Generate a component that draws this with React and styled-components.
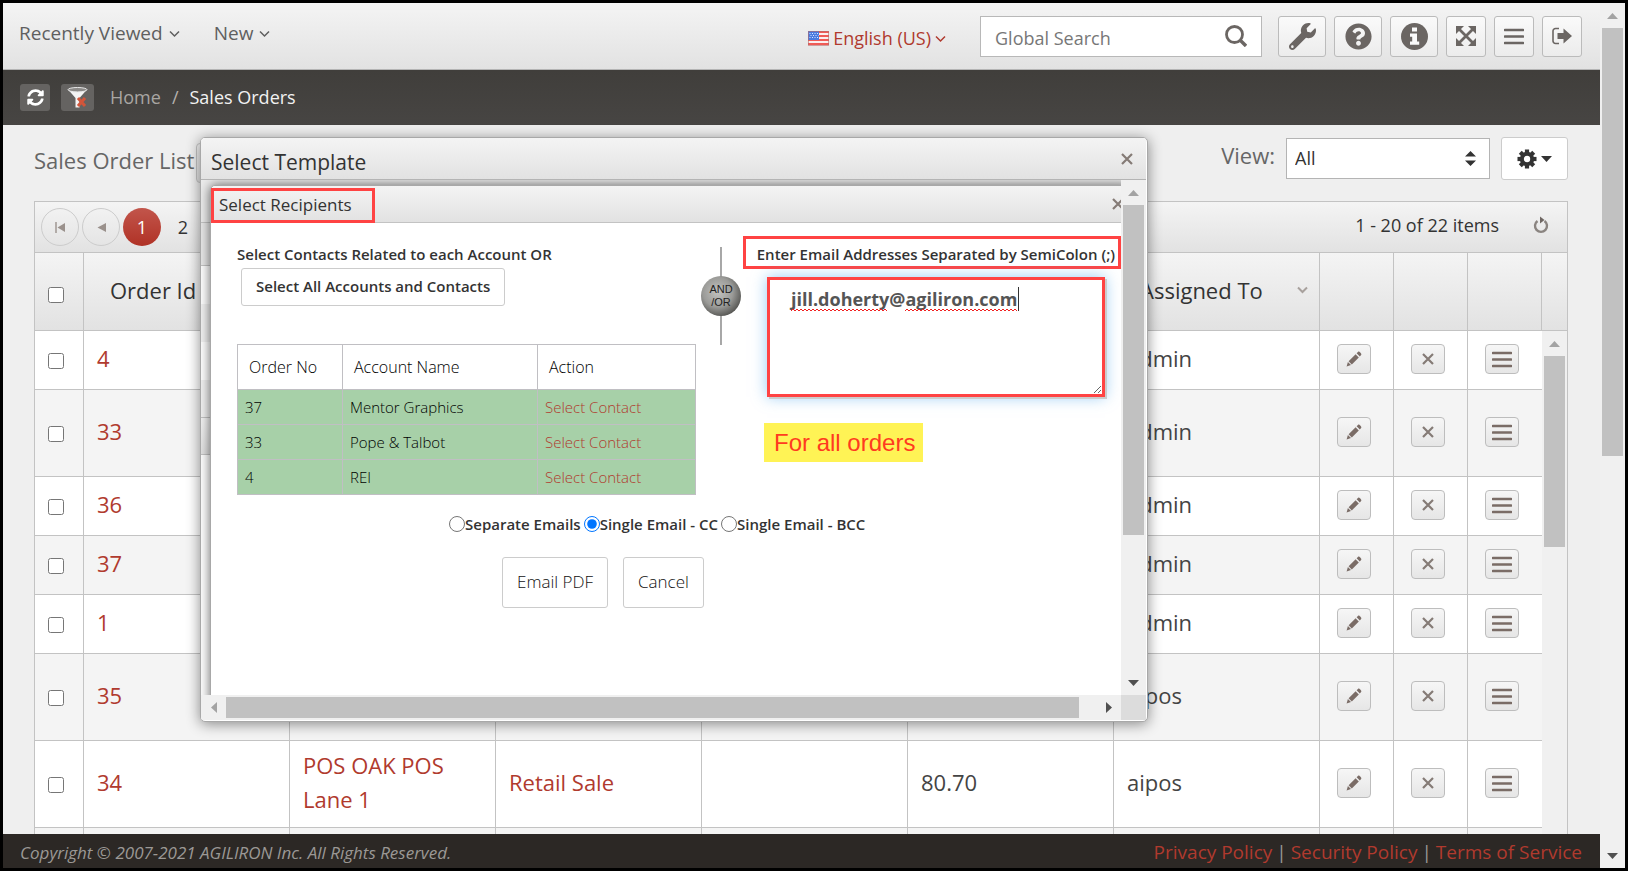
import React from 'react';
import styled, { createGlobalStyle, css } from 'styled-components';
import { FaWrench, FaQuestionCircle, FaSyncAlt, FaPlus } from 'react-icons/fa';

const GlobalStyle = createGlobalStyle`
  *, *::before, *::after {
    box-sizing: border-box;
  }

  body {
    margin: 0;
    font-family: 'Open Sans', 'Noto Sans', sans-serif;
    font-size: 18px;
    color: #333;
    background: #000;
  }

  button, input, select, textarea {
    font: inherit;
    color: inherit;
    margin: 0;
  }

  a {
    color: #b03a2e;
    text-decoration: none;
  }
`;

const barGradient = 'linear-gradient(#f4f4f4, #e2e2e2)';
const line = '#c3c3c3';

const Frame = styled.div`
  position: relative;
  display: flex;
  height: 100vh;
  border: 3px solid #000;
  background: #efefef;
  overflow: hidden;
`;

const Page = styled.div`
  flex: 1;
  min-width: 0;
  display: flex;
  flex-direction: column;
`;

/* scrollbars */

const Track = styled.div`
  flex: none;
  display: flex;
  flex-direction: ${props => (props.$horizontal ? 'row' : 'column')};
  background: #f0f0f0;
  ${props => (props.$horizontal ? 'height: 25px;' : 'width: 25px;')}
`;

const ArrowBox = styled.div`
  flex: none;
  width: 25px;
  height: 25px;
  display: flex;
  align-items: center;
  justify-content: center;
`;

const ThumbArea = styled.div`
  flex: 1;
  min-width: 0;
  min-height: 0;
`;

const Thumb = styled.div`
  background: #c1c1c1;
  ${props => (props.$horizontal ? 'height: 21px; margin: 2px 0;' : 'width: 21px; margin: 0 2px;')}
`;

const arrowShapes = {
  up: '0,6 11,6 5.5,0',
  down: '0,0 11,0 5.5,6',
  left: '6,0 6,11 0,5.5',
  right: '0,0 0,11 6,5.5',
};

const Arrow = ({ dir, color }) => {
  const vertical = dir === 'up' || dir === 'down';
  return (
    <svg width={vertical ? 11 : 6} height={vertical ? 6 : 11} aria-hidden="true">
      <polygon points={arrowShapes[dir]} fill={color} />
    </svg>
  );
};

const Scrollbar = ({ horizontal, size, openEnded }) => (
  <Track $horizontal={horizontal}>
    <ArrowBox>
      <Arrow dir={horizontal ? 'left' : 'up'} color="#a3a3a3" />
    </ArrowBox>
    <ThumbArea>
      <Thumb $horizontal={horizontal} style={horizontal ? { width: size } : { height: size }} />
    </ThumbArea>
    {!openEnded && (
      <ArrowBox>
        <Arrow dir={horizontal ? 'right' : 'down'} color="#505050" />
      </ArrowBox>
    )}
  </Track>
);

/* top bar */

const TopBar = styled.header`
  flex: none;
  height: 67px;
  display: flex;
  align-items: center;
  padding: 0 18px 0 16px;
  background: ${barGradient};
  border-bottom: 1px solid #b4b4b4;
`;

const MenuButton = styled.button`
  display: flex;
  align-items: center;
  gap: 6px;
  padding: 0;
  margin-right: 34px;
  margin-bottom: 6px;
  border: none;
  background: none;
  font-size: ${props => (props.$language ? 18 : 19)}px;
  color: ${props => (props.$language ? '#b03a2e' : '#5f5f5f')};
  ${props => props.$language && css`
    margin: 4px 34px 0 auto;
    gap: 4px;
  `}
`;

const SearchBox = styled.label`
  display: flex;
  align-items: center;
  width: 282px;
  height: 41px;
  margin-right: 16px;
  padding: 0 14px;
  background: #fff;
  border: 1px solid #b8b8b8;
`;

const SearchInput = styled.input`
  flex: 1;
  min-width: 0;
  padding: 3px 0 0;
  border: none;
  outline: none;
  background: none;

  &::placeholder {
    color: #777;
    opacity: 1;
  }
`;

const Tools = styled.div`
  display: flex;
  gap: 8px;
`;

const ToolButton = styled.button`
  width: ${props => (props.$wide ? 48 : 40)}px;
  height: 41px;
  display: flex;
  align-items: center;
  justify-content: center;
  padding: 0;
  color: #6b6663;
  background: linear-gradient(#fafafa, #ececec);
  border: 1px solid #bbb;
  border-radius: 3px;
`;

const Crumbs = styled.nav`
  flex: none;
  height: 55px;
  display: flex;
  align-items: center;
  gap: 11px;
  padding: 0 17px 2px;
  color: #b5b1ae;
  background: linear-gradient(#403e3b, #474543);
`;

const CrumbButton = styled.button`
  width: ${props => (props.$wide ? 33 : 30)}px;
  height: 27px;
  display: flex;
  align-items: center;
  justify-content: center;
  margin-top: 2px;
  padding: 0;
  color: #fff;
  background: #656361;
  border: none;
  border-radius: 3px;
`;

const CrumbLink = styled.a`
  margin-left: 5px;
  color: #a9a6a3;
`;

const CrumbCurrent = styled.span`
  color: #f2f2f2;
`;

/* order list */

const Main = styled.main`
  flex: 1;
  min-height: 0;
  display: flex;
  flex-direction: column;
  padding: 0 32px 0 31px;
`;

const ListHead = styled.div`
  flex: none;
  height: 76px;
  display: flex;
  align-items: flex-start;
  padding-top: 12px;
`;

const ListTitle = styled.h1`
  margin: 3px 2px 0 0;
  font-size: 22px;
  line-height: 40px;
  font-weight: 400;
  color: #666;
`;

const AddButton = styled.button`
  width: 48px;
  height: 40px;
  margin-top: 6px;
  padding: 0;
  background: ${barGradient};
  border: 1px solid ${line};
  border-radius: 4px;
`;

const ViewLabel = styled.label`
  margin: 0 11px 0 auto;
  font-size: 22px;
  line-height: 36px;
  color: #666;
`;

const SelectWrap = styled.div`
  position: relative;
  width: 204px;
  margin: 1px 11px 0 0;

  svg {
    position: absolute;
    right: 14px;
    top: 13px;
    pointer-events: none;
  }
`;

const ViewSelect = styled.select`
  width: 100%;
  height: 41px;
  padding: 0 8px 2px;
  appearance: none;
  background: #fff;
  border: 1px solid #b4b4b4;
  border-radius: 0;
`;

const GearButton = styled.button`
  width: 67px;
  height: 43px;
  display: flex;
  align-items: center;
  justify-content: center;
  gap: 4px;
  padding: 0;
  background: #fff;
  border: 1px solid #ccc;
  border-radius: 3px;
`;

const Grid = styled.section`
  flex: 1;
  min-height: 0;
  display: flex;
  flex-direction: column;
  border: 1px solid ${line};
  border-bottom: none;
  background: #f0f0f0;
`;

const Pager = styled.div`
  flex: none;
  height: 51px;
  display: flex;
  align-items: center;
  gap: 3px;
  padding: 0 18px 0 6px;
  background: ${barGradient};
  border-bottom: 1px solid ${line};
`;

const PagerButton = styled.button`
  width: 38px;
  height: 38px;
  display: flex;
  align-items: center;
  justify-content: center;
  padding: 0;
  color: ${props => (props.$active ? '#fff' : '#333')};
  background: ${props => (props.$active ? 'linear-gradient(#c2554b, #b03226)' : 'none')};
  border: ${props => (props.$round ? '1px solid #ccc' : 'none')};
  border-radius: 50%;
`;

const PagerInfo = styled.span`
  margin-left: auto;
  padding-bottom: 4px;
`;

const RefreshButton = styled.button`
  display: flex;
  margin-left: 31px;
  padding: 0 0 4px;
  background: none;
  border: none;
`;

const HeadRow = styled.div`
  flex: none;
  display: flex;
  padding-right: 25px;
  background: ${barGradient};
  border-bottom: 1px solid ${line};
`;

const BodyRow = styled.div`
  flex: 1;
  min-height: 0;
  display: flex;
  overflow: hidden;
`;

const BodyScroll = styled.div`
  flex: 1;
  min-width: 0;
  overflow: hidden;
`;

const OrderTable = styled.table`
  width: 100%;
  table-layout: fixed;
  border-collapse: separate;
  border-spacing: 0;
  font-size: 22px;
  line-height: 34px;
`;

const HeadCell = styled.th`
  height: 77px;
  padding: ${props => (props.$check ? '0 0 0 13px' : '0 11px 4px 26px')};
  font-weight: 400;
  text-align: left;
  border-right: 1px solid ${line};
`;

const HeadLabel = styled.span`
  display: flex;
  align-items: center;
  justify-content: space-between;
  white-space: nowrap;
`;

const Row = styled.tr`
  height: ${props => (props.$tall ? 87 : 59)}px;
  color: #444;
  background: ${props => (props.$alt ? '#f4f4f4' : '#fff')};
`;

const Cell = styled.td`
  padding: 0 13px 4px;
  border-right: 1px solid ${line};
  border-bottom: 1px solid ${line};

  &:last-child {
    border-right: none;
  }
`;

const ActionCell = styled(Cell)`
  padding: 0 17px 2px;
`;

const Check = styled.input`
  display: block;
  width: 16px;
  height: 16px;
  margin-top: 6px;
`;

const RowButton = styled.button`
  width: 34px;
  height: 30px;
  display: flex;
  align-items: center;
  justify-content: center;
  padding: 0;
  background: linear-gradient(#f6f6f6, #e6e6e6);
  border: 1px solid #bdbdbd;
  border-radius: 4px;
`;

const Footer = styled.footer`
  flex: none;
  height: 34px;
  display: flex;
  align-items: center;
  justify-content: space-between;
  padding: 2px 18px 0 17px;
  color: #9b9895;
  background: #2c2825;
`;

const Copyright = styled.em`
  font-size: 17px;
`;

const FooterLinks = styled.div`
  display: flex;
  gap: 4px;
  font-size: 19px;
`;

/* template window, with the recipients window inside it */

const TemplateWindow = styled.section`
  position: absolute;
  left: 197px;
  top: 134px;
  width: calc(100% - 674px);
  height: 585px;
  display: flex;
  flex-direction: column;
  padding: 0 1px 1px 0;
  border: 1px solid #a8a8a8;
  border-radius: 5px;
  background: #fff;
  box-shadow: 0 2px 14px rgba(0, 0, 0, 0.45);
  overflow: hidden;
`;

const TemplateHead = styled.div`
  flex: none;
  height: 42px;
  display: flex;
  align-items: center;
  justify-content: space-between;
  padding: 6px 13px 0 10px;
  background: ${barGradient};
  border-bottom: 1px solid #b4b4b4;
`;

const WindowTitle = styled.h2`
  margin: 0;
  font-size: ${props => (props.$small ? 17 : 21)}px;
  font-weight: 400;
`;

const CloseButton = styled.button`
  display: flex;
  flex: none;
  padding: 0;
  margin-bottom: ${props => (props.$raised ? 6 : 0)}px;
  background: none;
  border: none;
`;

const TemplateMain = styled.div`
  flex: 1;
  min-height: 0;
  display: flex;
`;

const TemplateBody = styled.div`
  position: relative;
  flex: 1;
  min-width: 0;
  overflow: hidden;
`;

const TemplateStripe = styled.div`
  height: ${props => props.$height}px;
  background: ${props => props.$fill};
  ${props => props.$lined && css`
    border-bottom: 1px solid ${line};
  `}
`;

const TemplateFoot = styled.div`
  flex: none;
  display: flex;
`;

const Corner = styled.div`
  width: 25px;
  height: 25px;
  background: #dcdcdc;
`;

const HorizontalBar = styled.div`
  flex: 1;
  min-width: 0;
`;

const RecipientsWindow = styled.section`
  position: absolute;
  left: 9px;
  top: 5px;
  right: -10px;
  bottom: -20px;
  border: 1px solid #a8a8a8;
  border-radius: 5px;
  background: #fff;
  box-shadow: 0 0 12px rgba(0, 0, 0, 0.6);
`;

const RecipientsHead = styled.div`
  height: 37px;
  display: flex;
  align-items: center;
  justify-content: space-between;
  padding-right: 6px;
  background: ${barGradient};
  border-bottom: 1px solid ${line};
  border-radius: 5px 5px 0 0;
`;

const redBox = css`
  border: 3px solid #ff4343;
`;

const TitleMark = styled.div`
  ${redBox}
  width: 164px;
  height: 35px;
  margin-top: 3px;
  padding: 0 0 2px 5px;
  display: flex;
  align-items: center;
`;

const RecipientsMain = styled.div`
  display: flex;
  align-items: flex-start;
  padding: 13px 9px 0 26px;
`;

const AccountsColumn = styled.div`
  width: 459px;
  padding-top: 7px;
`;

const FieldTitle = styled.h3`
  margin: 0;
  font-size: 15px;
  line-height: 22px;
  font-weight: 600;
`;

const PlainButton = styled.button`
  height: ${props => (props.$large ? 51 : 38)}px;
  padding: 0 14px 2px;
  font-size: ${props => (props.$large ? 17 : 15)}px;
  font-weight: ${props => (props.$large ? 300 : 600)};
  color: ${props => (props.$large ? '#111' : '#333')};
  background: #fff;
  border: 1px solid #ccc;
  border-radius: 3px;
`;

const SelectAllButton = styled(PlainButton)`
  margin: 3px 0 0 4px;
`;

const AccountTable = styled.table`
  width: 100%;
  margin-top: 38px;
  table-layout: fixed;
  border-collapse: collapse;
  font-size: 15px;
  font-weight: 300;
  color: #000;
  border: 1px solid #c0bfc3;

  th {
    height: 45px;
    padding: 0 11px;
    font-size: 16px;
    font-weight: 300;
    text-align: left;
    border: 1px solid #c0bfc3;
  }

  td {
    height: 35px;
    padding: 0 7px;
    background: #a7d0a8;
    border: 1px solid #c0bfc3;
  }
`;

const Divider = styled.div`
  width: 47px;
  margin-top: 11px;
  padding-left: 3px;
  display: flex;
  justify-content: center;
`;

const EmailColumn = styled.div`
  flex: 1;
  min-width: 0;
`;

const EmailTitle = styled.label`
  ${redBox}
  display: flex;
  align-items: center;
  justify-content: flex-end;
  width: 378px;
  height: 33px;
  padding: 3px 3px 0;
  font-size: 15px;
  font-weight: 600;
  white-space: nowrap;
`;

const EmailMark = styled.div`
  ${redBox}
  position: relative;
  width: 338px;
  height: 120px;
  margin: 8px 0 0 24px;
  box-shadow: 2px 2px 0 #ccc, 0 0 14px rgba(82, 168, 236, 0.6);
`;

const EmailInput = styled.textarea`
  display: block;
  width: 100%;
  height: 100%;
  padding: 5px 21px;
  font-size: 18px;
  line-height: 28px;
  font-weight: 700;
  color: #555;
  background: #fff;
  border: none;
  outline: none;
`;

const Squiggles = styled.svg`
  position: absolute;
  left: 21px;
  top: 7px;
`;

const Note = styled.p`
  display: inline-block;
  margin: 26px 0 0 21px;
  padding: 0 8px 0 10px;
  font-family: 'Liberation Sans', Arial, sans-serif;
  font-size: 24px;
  line-height: 39px;
  color: #ff3b1f;
  background: #fff355;
`;

const Choices = styled.div`
  display: flex;
  align-items: center;
  gap: 3px;
  margin: 18px 0 0 238px;
`;

const Choice = styled.label`
  display: flex;
  align-items: center;
  font-size: 15px;
  line-height: 22px;
  font-weight: 600;

  input {
    width: 16px;
    height: 16px;
  }
`;

const Actions = styled.div`
  display: flex;
  gap: 15px;
  margin: 22px 0 0 291px;
`;

/* icons */

const Chevron = ({ size = 11, color = 'currentColor', width = 1.5 }) => (
  <svg width={size} height={size} viewBox="0 0 11 11" aria-hidden="true">
    <path d="M1 3.5 5.5 8 10 3.5" fill="none" stroke={color} strokeWidth={width} />
  </svg>
);

const Flag = () => (
  <svg width="21" height="15" viewBox="0 0 21 15" aria-hidden="true">
    <rect width="21" height="15" fill="#fbeeee" />
    {[0, 4, 8, 12].map(y => (
      <rect key={y} y={y} width="21" height="2" fill="#ef5b56" />
    ))}
    <rect width="11" height="9" fill="#4a7be0" />
    <path d="M1.5 2.5h9M2.5 4.5h8M1.5 6.5h9" stroke="#dbe6ff" strokeDasharray="1 1.5" />
    <rect x=".5" y=".5" width="20" height="14" fill="none" stroke="#b06a6a" strokeOpacity=".6" />
  </svg>
);

const SearchIcon = () => (
  <svg width="22" height="22" viewBox="0 0 22 22" fill="none" stroke="#6b6663" aria-hidden="true">
    <circle cx="9.5" cy="9.5" r="8" strokeWidth="2.8" />
    <path d="m15 15 6 6" strokeWidth="3.4" />
  </svg>
);

const InfoIcon = () => (
  <svg width="27" height="27" viewBox="0 0 27 27" aria-hidden="true">
    <circle cx="13.5" cy="13.5" r="13.5" fill="currentColor" />
    <path d="M11 4.5h5v4h-5zM9 10.5h7v8h2.2v3.3H9v-3.3h2.2v-4.7H9z" fill="#fafafa" />
  </svg>
);

const ExpandIcon = () => (
  <svg width="20" height="20" viewBox="0 0 20 20" fill="currentColor" aria-hidden="true">
    <path d="M0 0h8L0 8zM20 0v8l-8-8zM0 20v-8l8 8zM20 20h-8l8-8z" />
    <path d="m3 3 14 14M17 3 3 17" stroke="currentColor" strokeWidth="2.8" />
  </svg>
);

const BarsIcon = ({ color = 'currentColor' }) => (
  <svg width="20" height="17" viewBox="0 0 20 17" aria-hidden="true">
    <path d="M1 2h18M1 8.5h18M1 15h18" stroke={color} strokeWidth="2.6" strokeLinecap="round" />
  </svg>
);

const SignOutIcon = () => (
  <svg width="20" height="18" viewBox="0 0 20 18" aria-hidden="true">
    <path d="M7 1.5H3.5a2.5 2.5 0 0 0-2.5 2.5v10a2.5 2.5 0 0 0 2.5 2.5H7" fill="none" stroke="currentColor" strokeWidth="1.6" />
    <path d="M5.5 6h6V1.5L20 9l-8.5 7.5V12h-6z" fill="currentColor" />
  </svg>
);

const FunnelIcon = () => (
  <svg width="22" height="21" viewBox="0 0 22 21" aria-hidden="true">
    <path d="M1 2.5 8.5 11v9.5h4V11L20 2.5z" fill="#f4f4f4" />
    <ellipse cx="10.5" cy="2.7" rx="9.5" ry="2.2" fill="#8b8987" stroke="#e8e8e8" strokeWidth="1" />
    <path d="m11 11 7 8M18 11l-7 8" stroke="#d2553a" strokeWidth="3" />
  </svg>
);

const SortIcon = () => (
  <svg width="11" height="15" viewBox="0 0 11 15" fill="#333" aria-hidden="true">
    <path d="M0 5.5 5.5 0 11 5.5zM0 9.5 5.5 15 11 9.5z" />
  </svg>
);

const GearIcon = () => (
  <svg width="20" height="20" viewBox="-10 -10 20 20" fill="#333" aria-hidden="true">
    {[0, 45, 90, 135].map(angle => (
      <rect key={angle} x="-2.1" y="-9.5" width="4.2" height="19" transform={`rotate(${angle})`} />
    ))}
    <circle r="7.2" />
    <circle r="3.2" fill="#fff" />
  </svg>
);

const ReloadIcon = () => (
  <svg width="16" height="18" viewBox="0 0 16 18" aria-hidden="true">
    <path d="M4.5 5A6 6 0 1 0 11.5 5" fill="none" stroke="#8a8480" strokeWidth="2.4" />
    <path d="M7 .5 11.5 4 7 7.5z" fill="#6f6763" />
  </svg>
);

const FirstIcon = () => (
  <svg width="10" height="11" viewBox="0 0 10 11" aria-hidden="true">
    <path d="M1 0v11" stroke="#9a918c" strokeWidth="1.4" />
    <path d="M10 1v9L2.5 5.5z" fill="#9a918c" />
  </svg>
);

const PrevIcon = () => (
  <svg width="9" height="9" viewBox="0 0 9 9" aria-hidden="true">
    <path d="M9 0v9L.5 4.5z" fill="#9a918c" />
  </svg>
);

const PencilIcon = () => (
  <svg width="16" height="16" viewBox="0 0 16 16" fill="#7a6c66" aria-hidden="true">
    <path d="m2.6 10.2 7-7 3.2 3.2-7 7z" />
    <path d="M1.9 11 5 14.1.6 15.4zM10.6 2.2l1.6-1.5c.8-.6 3.7 2 3.1 3.1l-1.5 1.6z" />
  </svg>
);

const CrossIcon = () => (
  <svg width="12" height="12" viewBox="0 0 12 12" aria-hidden="true">
    <path d="m1 1 10 10M11 1 1 11" stroke="#857b76" strokeWidth="2.2" />
  </svg>
);

const AndOr = () => (
  <svg
    width="40"
    height="98"
    viewBox="0 0 40 98"
    fontFamily="Liberation Sans, Arial, sans-serif"
    fontSize="11"
    textAnchor="middle"
    role="img"
    aria-label="and / or"
  >
    <defs>
      <radialGradient id="ball" cx="42%" cy="40%" r="62%">
        <stop offset="0" stopColor="#c2c2bf" />
        <stop offset=".6" stopColor="#9b9b98" />
        <stop offset="1" stopColor="#585855" />
      </radialGradient>
    </defs>
    <path d="M20 0v98" stroke="#6d6d6d" strokeWidth="1.2" />
    <circle cx="20" cy="49" r="20" fill="url(#ball)" />
    <text x="20" y="46" fill="#222">AND</text>
    <text x="20" y="59" fill="#222">/OR</text>
  </svg>
);

const wave = (from, to) => {
  let d = `M${from} 24`;
  for (let x = from; x < to; x += 4) {
    d += 'l2 -2l2 2';
  }
  return d;
};

const orders = [
  { id: '4', user: 'admin' },
  { id: '33', user: 'admin', tall: true },
  { id: '36', user: 'admin' },
  { id: '37', user: 'admin' },
  { id: '1', user: 'admin' },
  { id: '35', user: 'aipos', tall: true },
  { id: '34', account: 'POS OAK POS Lane 1', contact: 'Retail Sale', total: '80.70', user: 'aipos', tall: true },
  { id: '', user: '' },
];

const accounts = [
  { no: '37', name: 'Mentor Graphics' },
  { no: '33', name: 'Pope & Talbot' },
  { no: '4', name: 'REI' },
];

const Columns = () => (
  <colgroup>
    <col width="49" />
    <col />
    <col />
    <col />
    <col />
    <col />
    <col />
    <col width="74" />
    <col width="74" />
    <col width="74" />
  </colgroup>
);

const OrderRow = ({ order, alt }) => (
  <Row $tall={order.tall} $alt={alt}>
    <Cell>
      <Check type="checkbox" aria-label={`Order ${order.id}`} />
    </Cell>
    <Cell><a href="#order">{order.id}</a></Cell>
    <Cell><a href="#account">{order.account}</a></Cell>
    <Cell><a href="#contact">{order.contact}</a></Cell>
    <Cell />
    <Cell>{order.total}</Cell>
    <Cell>{order.user}</Cell>
    <ActionCell><RowButton aria-label="Edit"><PencilIcon /></RowButton></ActionCell>
    <ActionCell><RowButton aria-label="Delete"><CrossIcon /></RowButton></ActionCell>
    <ActionCell><RowButton aria-label="More"><BarsIcon color="#7a6c66" /></RowButton></ActionCell>
  </Row>
);

const Recipients = () => (
  <RecipientsWindow>
    <RecipientsHead>
      <TitleMark>
        <WindowTitle $small>Select Recipients</WindowTitle>
      </TitleMark>
      <CloseButton aria-label="Close recipients"><CrossIcon /></CloseButton>
    </RecipientsHead>
    <RecipientsMain>
      <AccountsColumn>
        <FieldTitle>Select Contacts Related to each Account OR</FieldTitle>
        <SelectAllButton>Select All Accounts and Contacts</SelectAllButton>
        <AccountTable>
          <colgroup>
            <col width="105" />
            <col width="195" />
            <col />
          </colgroup>
          <thead>
            <tr>
              <th>Order No</th>
              <th>Account Name</th>
              <th>Action</th>
            </tr>
          </thead>
          <tbody>
            {accounts.map(account => (
              <tr key={account.no}>
                <td>{account.no}</td>
                <td>{account.name}</td>
                <td><a href="#select">Select Contact</a></td>
              </tr>
            ))}
          </tbody>
        </AccountTable>
      </AccountsColumn>
      <Divider><AndOr /></Divider>
      <EmailColumn>
        <EmailTitle htmlFor="emails">Enter Email Addresses Separated by SemiColon (;)</EmailTitle>
        <EmailMark>
          <EmailInput id="emails" spellCheck={false} defaultValue="jill.doherty@agiliron.com" />
          {/* spelling marks and the caret */}
          <Squiggles width="230" height="25" fill="none" stroke="#f02020" aria-hidden="true">
            <path d={wave(0, 94)} />
            <path d={wave(114, 224)} />
            <path d="M227.5 0v24" stroke="#333" />
          </Squiggles>
        </EmailMark>
        <Note>For all orders</Note>
      </EmailColumn>
    </RecipientsMain>
    <Choices>
      <Choice><input type="radio" name="mode" />Separate Emails</Choice>
      <Choice><input type="radio" name="mode" defaultChecked />Single Email - CC</Choice>
      <Choice><input type="radio" name="mode" />Single Email - BCC</Choice>
    </Choices>
    <Actions>
      <PlainButton $large>Email PDF</PlainButton>
      <PlainButton $large>Cancel</PlainButton>
    </Actions>
  </RecipientsWindow>
);

const App = () => (
  <>
    <GlobalStyle />
    <Frame>
      <Page>
        <TopBar>
          <MenuButton>Recently Viewed <Chevron /></MenuButton>
          <MenuButton>New <Chevron /></MenuButton>
          <MenuButton $language><Flag /> English (US) <Chevron /></MenuButton>
          <SearchBox>
            <SearchInput type="text" placeholder="Global Search" aria-label="Global Search" />
            <SearchIcon />
          </SearchBox>
          <Tools>
            <ToolButton $wide aria-label="Setup"><FaWrench size={27} /></ToolButton>
            <ToolButton $wide aria-label="Help"><FaQuestionCircle size={27} /></ToolButton>
            <ToolButton $wide aria-label="About"><InfoIcon /></ToolButton>
            <ToolButton aria-label="Full screen"><ExpandIcon /></ToolButton>
            <ToolButton aria-label="Menu"><BarsIcon /></ToolButton>
            <ToolButton aria-label="Sign out"><SignOutIcon /></ToolButton>
          </Tools>
        </TopBar>
        <Crumbs>
          <CrumbButton aria-label="Refresh"><FaSyncAlt size={17} /></CrumbButton>
          <CrumbButton $wide aria-label="Clear filter"><FunnelIcon /></CrumbButton>
          <CrumbLink href="#home">Home</CrumbLink>
          <span>/</span>
          <CrumbCurrent>Sales Orders</CrumbCurrent>
        </Crumbs>
        <Main>
          <ListHead>
            <ListTitle>Sales Order List</ListTitle>
            <AddButton aria-label="Add order"><FaPlus size={14} /></AddButton>
            <ViewLabel htmlFor="view">View:</ViewLabel>
            <SelectWrap>
              <ViewSelect id="view"><option>All</option></ViewSelect>
              <SortIcon />
            </SelectWrap>
            <GearButton aria-label="Settings">
              <GearIcon />
              <Arrow dir="down" color="#333" />
            </GearButton>
          </ListHead>
          <Grid>
            <Pager>
              <PagerButton $round aria-label="First page"><FirstIcon /></PagerButton>
              <PagerButton $round aria-label="Previous page"><PrevIcon /></PagerButton>
              <PagerButton $active>1</PagerButton>
              <PagerButton>2</PagerButton>
              <PagerInfo>1 - 20 of 22 items</PagerInfo>
              <RefreshButton aria-label="Reload"><ReloadIcon /></RefreshButton>
            </Pager>
            <HeadRow>
              <OrderTable>
                <Columns />
                <thead>
                  <tr>
                    <HeadCell $check><Check type="checkbox" aria-label="All orders" /></HeadCell>
                    <HeadCell>Order Id</HeadCell>
                    <HeadCell />
                    <HeadCell />
                    <HeadCell />
                    <HeadCell />
                    <HeadCell>
                      <HeadLabel>Assigned To <Chevron color="#a8a19d" width={2} /></HeadLabel>
                    </HeadCell>
                    <HeadCell />
                    <HeadCell />
                    <HeadCell />
                  </tr>
                </thead>
              </OrderTable>
            </HeadRow>
            <BodyRow>
              <BodyScroll>
                <OrderTable>
                  <Columns />
                  <tbody>
                    {orders.map((order, i) => (
                      <OrderRow key={order.id} order={order} alt={i % 2 === 1} />
                    ))}
                  </tbody>
                </OrderTable>
              </BodyScroll>
              <Scrollbar size="40%" openEnded />
            </BodyRow>
          </Grid>
        </Main>
        <Footer>
          <Copyright>Copyright © 2007-2021 AGILIRON Inc. All Rights Reserved.</Copyright>
          <FooterLinks>
            <a href="#privacy">Privacy Policy</a>
            <span>|</span>
            <a href="#security">Security Policy</a>
            <span>|</span>
            <a href="#terms">Terms of Service</a>
          </FooterLinks>
        </Footer>
      </Page>
      <Scrollbar size="52.5%" />
      <TemplateWindow>
        <TemplateHead>
          <WindowTitle>Select Template</WindowTitle>
          <CloseButton $raised aria-label="Close template"><CrossIcon /></CloseButton>
        </TemplateHead>
        <TemplateMain>
          <TemplateBody>
            <TemplateStripe $height={43} $fill="#ececec" $lined />
            <TemplateStripe $height={43} $fill="#e8e8e8" $lined />
            <TemplateStripe $height={38} $fill="#fff" />
            <TemplateStripe $height={38} $fill="#f2f2f2" />
            <TemplateStripe $height={38} $fill="#fff" />
            <TemplateStripe $height={38} $fill="#f2f2f2" $lined />
            <TemplateStripe $height={37} $fill={barGradient} $lined />
            <Recipients />
          </TemplateBody>
          <Scrollbar size="71%" />
        </TemplateMain>
        <TemplateFoot>
          <HorizontalBar><Scrollbar horizontal size="98%" /></HorizontalBar>
          <Corner />
        </TemplateFoot>
      </TemplateWindow>
    </Frame>
  </>
);

export default App;
